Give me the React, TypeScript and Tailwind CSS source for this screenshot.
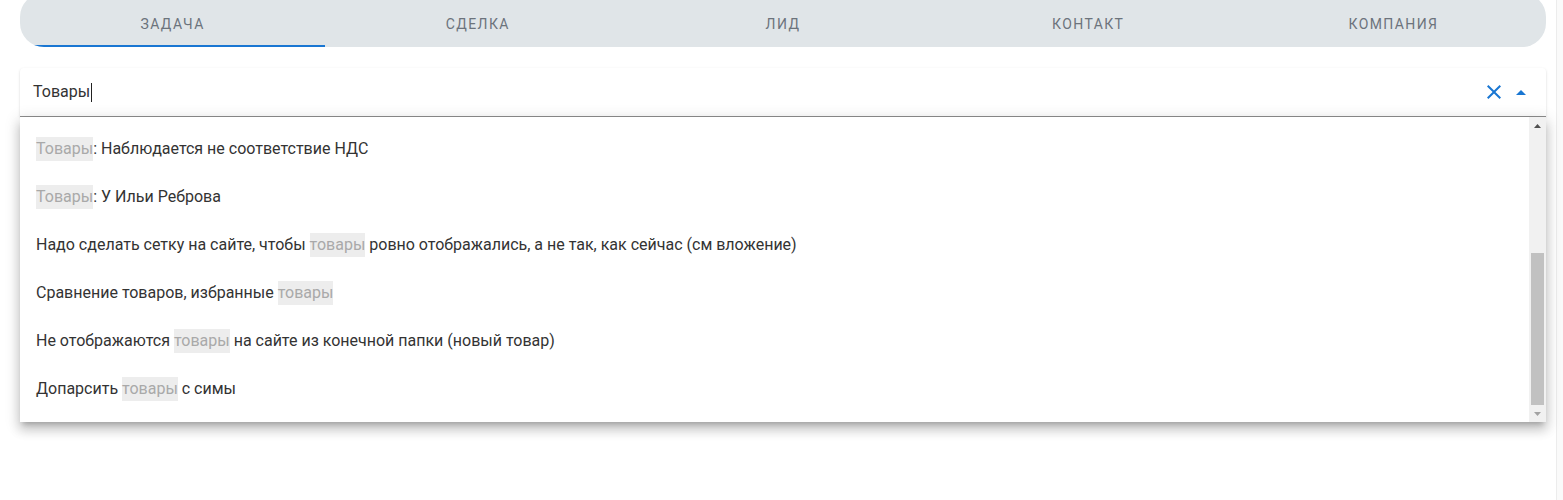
import React from "react";

const tabs = ["Задача", "Сделка", "Лид", "Контакт", "Компания"];

type Part = { t: string; h?: boolean };
const items: Part[][] = [
  [{ t: "Товары", h: true }, { t: ": Наблюдается не соответствие НДС" }],
  [{ t: "Товары", h: true }, { t: ": У Ильи Реброва" }],
  [
    { t: "Надо сделать сетку на сайте, чтобы " },
    { t: "товары", h: true },
    { t: " ровно отображались, а не так, как сейчас (см вложение)" },
  ],
  [{ t: "Сравнение товаров, избранные " }, { t: "товары", h: true }],
  [
    { t: "Не отображаются " },
    { t: "товары", h: true },
    { t: " на сайте из конечной папки (новый товар)" },
  ],
  [{ t: "Допарсить " }, { t: "товары", h: true }, { t: " с симы" }],
];

export default function App() {
  return (
    <div
      className="flex h-[500px] w-full overflow-hidden bg-white"
      style={{ fontFamily: "Roboto, 'Noto Sans', sans-serif" }}
    >
      <div className="flex-1">
        <div className="ml-[20px] w-[1526px]">
          {/* Tabs */}
          <div className="mt-[-7px] flex h-[54px] overflow-hidden rounded-[24px] bg-[#e0e5e8] pt-[8px]">
            {tabs.map((t, i) => (
              <div
                key={t}
                className="relative flex h-[46px] flex-1 items-center justify-center text-[14px] font-normal uppercase tracking-[0.1em] text-[#6c737c]"
              >
                {t}
                {i === 0 && (
                  <div className="absolute bottom-0 left-0 right-0 h-[2px] bg-[#1976d2]" />
                )}
              </div>
            ))}
          </div>

          {/* Input */}
          <div className="mt-[21px] flex h-[49px] items-center rounded-t-[4px] border-b border-[#8f8f8f] bg-white pl-[13px] pr-[20px] shadow-[0_1px_3px_rgba(0,0,0,0.12),0_1px_2px_rgba(0,0,0,0.06)]">
            <div className="flex flex-1 items-center text-[16px] text-[#333]">
              Товары
              <span className="ml-[1px] inline-block h-[19px] w-[1px] bg-[#222]" />
            </div>
            <svg width="24" height="24" viewBox="0 0 24 24" className="mr-[10px]">
              <path
                d="M19 6.41 17.59 5 12 10.59 6.41 5 5 6.41 10.59 12 5 17.59 6.41 19 12 13.41 17.59 19 19 17.59 13.41 12z"
                fill="#1976d2"
              />
            </svg>
            <svg width="10" height="5" viewBox="0 0 10 5">
              <path d="M0 5 5 0 10 5z" fill="#1976d2" />
            </svg>
          </div>

          {/* Dropdown */}
          <div className="relative flex bg-white shadow-[0_5px_5px_-3px_rgba(0,0,0,0.2),0_8px_10px_1px_rgba(0,0,0,0.14),0_3px_14px_2px_rgba(0,0,0,0.12)]">
            <div className="flex-1 pb-[7px] pt-[8px]">
              {items.map((parts, i) => (
                <div
                  key={i}
                  className="flex h-[48px] items-center whitespace-pre px-[16px] text-[16px] text-[#333]"
                >
                  {parts.map((p, j) =>
                    p.h ? (
                      <span key={j} className="bg-[#ededed] text-[#a9a9a9]">
                        {p.t}
                      </span>
                    ) : (
                      <span key={j}>{p.t}</span>
                    )
                  )}
                </div>
              ))}
            </div>
            {/* scrollbar */}
            <div className="flex w-[17px] flex-col bg-[#f1f1f1]">
              <div className="flex h-[17px] items-center justify-center">
                <svg width="7" height="4" viewBox="0 0 7 4">
                  <path d="M0 4 3.5 0 7 4z" fill="#505050" />
                </svg>
              </div>
              <div className="flex-1 px-[2px] pt-[119px]">
                <div className="h-[152px] bg-[#c1c1c1]" />
              </div>
              <div className="flex h-[17px] items-center justify-center">
                <svg width="7" height="4" viewBox="0 0 7 4">
                  <path d="M0 0 3.5 4 7 0z" fill="#a3a3a3" />
                </svg>
              </div>
            </div>
          </div>
        </div>
      </div>
      <div className="h-[500px] w-[7px] border-l border-[#ececec] bg-[#fafafa]" />
    </div>
  );
}
